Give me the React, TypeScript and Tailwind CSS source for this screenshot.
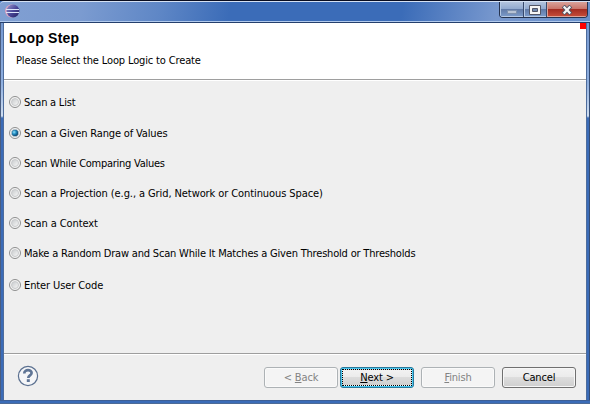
import React from "react";

const options = [
  { label: "Scan a List", cls: "h-[31px] tracking-[-0.22px]" },
  { label: "Scan a Given Range of Values", cls: "h-[30px] tracking-[-0.15px]" },
  { label: "Scan While Comparing Values", cls: "h-[30px] tracking-[-0.26px]" },
  { label: "Scan a Projection (e.g., a Grid, Network or Continuous Space)", cls: "h-[30px] tracking-[-0.09px]" },
  { label: "Scan a Context", cls: "h-[30px] tracking-[-0.1px]" },
  { label: "Make a Random Draw and Scan While It Matches a Given Threshold or Thresholds", cls: "h-[32px] tracking-[-0.19px]" },
  { label: "Enter User Code", cls: "h-[30px] tracking-[-0.1px]" },
];

function Radio({ checked }: { checked: boolean }) {
  return (
    <span className="flex size-3 shrink-0 items-center justify-center rounded-full border border-[#8e8f8f] bg-[#f4f4f4]">
      {checked ? (
        <span className="flex size-2 items-center justify-center rounded-full border border-[#b5c5cf] bg-[#0b3a5e]">
          <span className="size-[6px] shrink-0 rounded-full bg-[radial-gradient(circle_at_35%_35%,#8ee0fb_0%,#1d86bb_40%,#0b2f50_90%)]" />
        </span>
      ) : (
        <span className="size-2 rounded-full border border-[#c8cacc] bg-linear-to-br from-[#c9ccce] to-[#f6f6f6]" />
      )}
    </span>
  );
}

function EclipseLogo() {
  return (
    <svg width="15" height="14" viewBox="0 0 15 14">
      <defs>
        <linearGradient id="globe" x1="0" x2="1" y1="0" y2="1">
          <stop offset="0" stopColor="#9a98cf" />
          <stop offset="0.5" stopColor="#4b489a" />
          <stop offset="1" stopColor="#25205f" />
        </linearGradient>
      </defs>
      <circle cx="6.5" cy="7" r="6.5" fill="#d9a3c0" />
      <circle cx="8" cy="7" r="6.4" fill="url(#globe)" />
      <path d="M1 5.5H14M1 8.5H14" stroke="#dce6fa" strokeWidth="1" />
    </svg>
  );
}

function WindowButtons() {
  return (
    <div className="mr-[-1px] flex h-4 w-[89px] overflow-hidden rounded-b-[4px] border border-t-0 border-[#26334f]">
      <div className="flex w-6 items-center justify-center border-r border-[#38496c] bg-[linear-gradient(#b3c3dd_0%,#91a9cf_46%,#627ba8_50%,#7d9dcc_100%)] shadow-[inset_1px_-1px_0_#b6c9e4]">
        <span className="mt-1 h-1 w-[10px] border border-[#7f92b0] bg-[#b9c4d5]" />
      </div>
      <div className="flex w-[23px] items-center justify-center border-r border-[#38496c] bg-[linear-gradient(#b3c3dd_0%,#91a9cf_46%,#627ba8_50%,#7d9dcc_100%)] shadow-[inset_1px_-1px_0_#b6c9e4]">
        <svg width="12" height="10" viewBox="0 0 12 10">
          <path d="M.5.5h11v9H.5z" fill="#f5f5f5" stroke="#535666" />
          <path d="M3.5 3.5h5v3h-5z" fill="#7089b0" stroke="#535666" />
        </svg>
      </div>
      <div className="flex grow items-center justify-center bg-[linear-gradient(#d9a29a_0%,#ca7469_46%,#a42d22_50%,#c84f3b_100%)] shadow-[inset_1px_-1px_0_#dda297]">
        <svg width="12" height="10" viewBox="0 0 12 10">
          <path d="M2.2 1 9.8 9M9.8 1 2.2 9" stroke="#535666" strokeWidth="4" />
          <path d="M2.7 1.5 9.3 8.5M9.3 1.5 2.7 8.5" stroke="#f5f5f5" strokeWidth="2.2" />
        </svg>
      </div>
    </div>
  );
}

const disabledButton =
  "flex h-[21px] w-[74px] items-center justify-center rounded-[3px] border border-[#adb2b5] bg-[#f4f4f4] pt-[2px] text-[#838383] shadow-[inset_0_0_0_1px_#fafafa]";

export default function App() {
  return (
    <div className="flex h-[404px] w-[590px] flex-col overflow-hidden bg-[#3b6cb8] font-['DejaVu_Sans_Condensed','DejaVu_Sans',sans-serif] text-[11px] font-stretch-condensed text-black">
      <div className="h-px shrink-0 bg-[#090d20]" />
      <header className="flex h-[22px] shrink-0 items-start justify-between rounded-tl-[4px] border-t border-b border-t-[#d5e1f3] border-b-[#243f6d] bg-[linear-gradient(100deg,#809fd2_0%,#7b9bd0_14%,#5f87c6_27%,#3b6cb8_39%,#3b6cb8_68%,#7898ce_84%,#6890cb_100%)] pr-[3px] pl-[5px] shadow-[inset_0_-1px_0_#b1caed]">
        <div className="pt-[2px]">
          <EclipseLogo />
        </div>
        <WindowButtons />
      </header>

      <div className="flex h-[377px] shrink-0">
        <div className="w-1 shrink-0 border-r border-l border-r-[#4d6c9c] border-l-[#4a5d80] bg-[linear-gradient(#7599d2_0px,#8fafdf_60px,#cfdef1_93px,#3b6cb8_95px)]" />
        <main className="flex w-[582px] flex-col bg-[#efefef]">
          <section className="relative h-[57px] shrink-0 border-b border-[#9e9e9e] bg-white">
            <h1 className="pt-[7px] pl-[5px] font-['Liberation_Sans',Arial,sans-serif] text-[14px] leading-4 font-bold tracking-[0.2px]">
              Loop Step
            </h1>
            <p className="pt-[8px] pl-3 leading-[14px] tracking-[-0.14px]">Please Select the Loop Logic to Create</p>
            <span className="absolute top-0 right-0 size-[6px] bg-[#ff0000]" />
          </section>

          <section className="flex h-[273px] shrink-0 flex-col border-t border-white pt-[15px] pl-[5px]">
            {options.map((option, i) => (
              <label key={option.label} className={`flex shrink-0 items-start gap-[3px] whitespace-nowrap ${option.cls}`}>
                <Radio checked={i === 1} />
                <span className="pt-px leading-3">{option.label}</span>
              </label>
            ))}
          </section>

          <footer className="flex grow items-start border-t border-[#9e9e9e] pt-[13px] pl-[13px] shadow-[inset_0_1px_0_#fff]">
            <svg className="mt-[-2px]" width="22" height="22" viewBox="0 0 22 22">
              <circle cx="11" cy="11" r="9.6" fill="#f5f6f8" stroke="#5b7090" strokeWidth="1.2" />
              <path d="M7.3 8.5C7.2 4.1 14.8 4.3 14.6 8c-.1 2.5-3.3 2.4-3.3 5" fill="none" stroke="#5f7596" strokeWidth="2.7" />
              <path d="M9.8 14.2h3v2.8h-3z" fill="#5f7596" />
            </svg>
            <div className="ml-[225px] flex tracking-[-0.15px]">
              <button className={disabledButton} disabled>
                <span>&lt; <u>B</u>ack</span>
              </button>
              <button className="ml-[2px] flex h-[21px] w-[74px] rounded-[3px] border border-[#2c7899] bg-[#46c8f2] p-px">
                <span className="flex size-full items-center justify-center border border-dotted border-black bg-[linear-gradient(#f2f2f2_0%,#ebebeb_48%,#dcdcdc_50%,#d0d0d0_100%)] pt-[2px]">
                  <span><u>N</u>ext &gt;</span>
                </span>
              </button>
              <button className={`ml-[7px] ${disabledButton}`} disabled>
                <span><u>F</u>inish</span>
              </button>
              <button className="ml-[7px] flex h-[21px] w-[74px] items-center justify-center rounded-[3px] border border-[#707070] bg-[linear-gradient(#f2f2f2_0%,#ebebeb_48%,#dddddd_50%,#cfcfcf_100%)] pt-[2px] shadow-[inset_0_0_0_1px_#f7f7f7]">
                Cancel
              </button>
            </div>
          </footer>
        </main>
        <div className="w-1 shrink-0 border-r border-l border-r-[#344c74] border-l-[#4d6c9c] bg-[linear-gradient(#7599d2_0px,#8fafdf_60px,#cfdef1_93px,#3b6cb8_95px)]" />
      </div>
      <div className="grow border-t border-b border-t-[#3d5f96] border-b-[#4d6a96] bg-[#3b6cb8]" />
    </div>
  );
}
